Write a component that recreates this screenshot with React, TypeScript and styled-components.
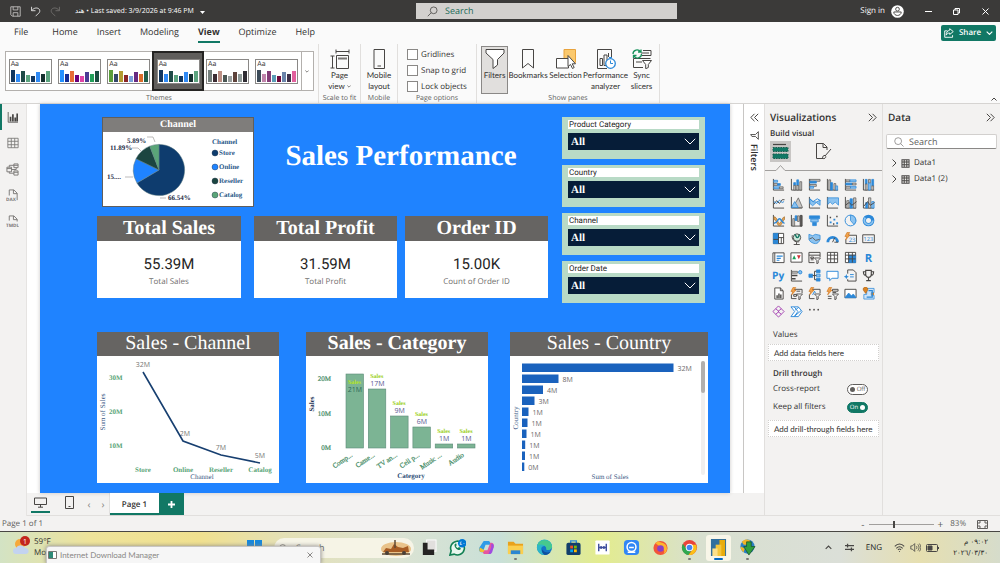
import React from 'react';
import styled, { createGlobalStyle } from 'styled-components';

const ui = '"Open Sans", "Noto Sans", "DejaVu Sans", sans-serif';
const compact = 'Lato, "Open Sans", sans-serif';
const serif = '"Liberation Serif", serif';
const ink = '#484644';
const blue = '#2b88d8';
const pale = '#8cc3f0';
const green = '#117865';

const Global = createGlobalStyle`
  * { box-sizing: border-box; }
  body { margin: 0; font-family: ${ui}; font-size: 8px; line-height: 12px; color: #323130; text-rendering: geometricPrecision; }
  button, input, select { font: inherit; color: inherit; margin: 0; padding: 0; border: 0; background: none; text-rendering: inherit; }
  svg { display: block; flex: none; }
  h1, h2, p { margin: 0; }
`;

const Shell = styled.div`
  min-height: 100vh;
  display: flex;
  flex-direction: column;
  background: #f3f2f1;
`;

/* ---------- title bar ---------- */
const TitleBar = styled.header`
  display: grid;
  grid-template-columns: 416fr 261fr 323fr;
  align-items: center;
  height: 22px;
  background: #3b3a39;
  color: #fff;
`;
const TitleLeft = styled.div`
  display: flex;
  align-items: center;
  gap: 9px;
  padding-left: 10px;
`;
const FileName = styled.span`
  display: flex;
  align-items: center;
  gap: 6px;
  padding: 2px 0 0 5px;
  font-size: 7px;
  white-space: nowrap;
`;
const TitleSearch = styled.label`
  display: flex;
  align-items: center;
  gap: 7px;
  height: 16px;
  padding: 0 11px;
  background: #d2d0ce;
  color: #3b3a39;
  input { flex: 1; min-width: 0; font-size: 9px; outline: 0; }
  input::placeholder { color: #1c6b58; opacity: 1; }
`;
const TitleRight = styled.div`
  display: flex;
  align-items: center;
  justify-content: flex-end;
  padding-right: 10px;
`;
const SignIn = styled.button`
  display: flex;
  align-items: center;
  gap: 6px;
  margin-right: 10px;
`;
const WinButton = styled.button`
  display: grid;
  place-items: center;
  width: 28px;
  height: 20px;
  &:last-child { width: 10px; margin-left: 10px; }
`;

/* ---------- ribbon ---------- */
const Ribbon = styled.div`
  background: #fafafa;
  border-bottom: 1px solid #d6d4d2;
`;
const TabRow = styled.nav`
  display: flex;
  align-items: center;
  height: 22px;
  padding: 0 4px 0 14px;
  gap: 19px;
`;
const RibbonTab = styled.button<{ $on?: boolean }>`
  height: 20px;
  font-size: 9px;
  line-height: 18px;
  font-weight: ${p => (p.$on ? 700 : 400)};
  border-bottom: 2px solid ${p => (p.$on ? green : 'transparent')};
  &:first-child { margin-right: 5px; }
`;
const ShareButton = styled.button`
  display: flex;
  align-items: center;
  justify-content: center;
  gap: 5px;
  width: 55px;
  height: 16px;
  margin-left: auto;
  border-radius: 2px;
  background: ${green};
  color: #fff;
  font-weight: 600;
`;
const GroupRow = styled.div`
  display: flex;
  height: 59px;
`;
const Group = styled.section<{ $w: number }>`
  display: flex;
  flex-direction: column;
  align-items: center;
  flex: 0 0 ${p => p.$w}px;
  border-right: 1px solid #e1dfdd;
`;
const GroupBody = styled.div`
  flex: 1;
  display: flex;
  align-items: flex-start;
  padding-top: 2px;
`;
const GroupLabel = styled.span`
  font-size: 7px;
  line-height: 8px;
  color: #605e5c;
  white-space: nowrap;
`;
const Gallery = styled.div`
  display: flex;
  width: 309px;
  height: 40px;
  margin-top: 5px;
  border: 1px solid #b3b0ad;
  background: #fff;
`;
const Thumb = styled.button<{ $on?: boolean }>`
  flex: 1;
  display: grid;
  place-items: center;
  background: ${p => (p.$on ? '#605e5c' : 'transparent')};
  outline: ${p => (p.$on ? '2px solid #252423' : '0')};
  outline-offset: -1px;
`;
const ThumbCard = styled.span`
  display: block;
  width: 43px;
  height: 25px;
  border: 1px solid #8a8886;
  background: #fff;
  text-align: left;
  padding: 1px 1px 0;
  font-size: 7px;
  line-height: 8px;
`;
const ThumbBars = styled.span`
  display: flex;
  align-items: flex-end;
  height: 13px;
  gap: 1px;
`;
const ThumbBar = styled.i<{ $h: number; $c: string }>`
  flex: 1;
  height: ${p => p.$h}px;
  background: ${p => p.$c};
`;
const GalleryMore = styled.button`
  display: grid;
  place-items: center;
  width: 11px;
  border-left: 1px solid #b3b0ad;
`;
const BigButton = styled.button<{ $w: number; $on?: boolean }>`
  display: flex;
  flex-direction: column;
  align-items: center;
  gap: 1px;
  width: ${p => p.$w}px;
  height: 48px;
  padding-top: 2px;
  font-family: ${compact};
  line-height: 11px;
  text-align: center;
  border: 1px solid ${p => (p.$on ? '#8a8886' : 'transparent')};
  background: ${p => (p.$on ? '#e1dfdd' : 'transparent')};
  span { white-space: pre; }
  span svg { display: inline-block; margin-left: 2px; vertical-align: middle; }
`;
const Checks = styled.div`
  display: flex;
  flex-direction: column;
  gap: 5px;
  padding-top: 3px;
`;
const Check = styled.label`
  display: flex;
  align-items: center;
  gap: 3px;
  height: 11px;
  white-space: nowrap;
  input { appearance: none; width: 11px; height: 11px; border: 1px solid #8a8886; background: #fff; }
`;
const Collapse = styled.button`
  margin: auto 3px 2px auto;
`;

/* ---------- workspace ---------- */
const Work = styled.div`
  flex: 1;
  display: flex;
  align-items: stretch;
`;
const Center = styled.div`
  flex: 1;
  min-width: 0;
  display: flex;
  flex-direction: column;
`;
const Rail = styled.nav`
  width: 27px;
  display: flex;
  flex-direction: column;
  border-right: 1px solid #e6e4e2;
`;
const RailButton = styled.button<{ $on?: boolean }>`
  display: grid;
  place-items: center;
  height: 26px;
  padding-right: 3px;
  border-left: 2px solid ${p => (p.$on ? green : 'transparent')};
`;
const Stage = styled.div`
  flex: 1;
  display: flex;
  background: #fff;
`;
const Canvas = styled.main`
  flex: 1;
  margin: 0 13px;
  padding: 13px 22px 10px 57px;
  background: #1f83ff;
  box-shadow: 0 0 4px #c8c6c4;
`;
const TopGrid = styled.div`
  display: grid;
  grid-template-columns: 451fr 143fr;
  column-gap: 14px;
  padding-right: 3px;
`;
const Hero = styled.div`
  display: flex;
  padding-left: 5px;
  margin-bottom: 9px;
`;
const PieCard = styled.section`
  flex: 0 0 152px;
  height: 90px;
  border: 1px solid #605e5c;
  background: #fff;
  h2 {
    height: 14px;
    background: #7f7d7b;
    color: #fff;
    font: bold 10px/13px ${serif};
    text-align: center;
  }
`;
const ReportTitle = styled.h1`
  flex: 1;
  padding-top: 22px;
  color: #fff;
  font: bold 29px/34px ${serif};
  text-align: center;
  white-space: nowrap;
`;
const Kpis = styled.div`
  display: grid;
  grid-template-columns: 157fr 151fr 143fr;
`;
const KpiCard = styled.section`
  height: 82px;
  background: #fff;
  text-align: center;
  &:nth-child(1) { margin-right: 13px; }
  &:nth-child(2) { margin-right: 8px; }
  h2 {
    height: 25px;
    background: #666462;
    color: #fff;
    font: bold 20px/24px ${serif};
  }
  strong {
    display: block;
    padding-top: 14px;
    color: #252423;
    font: 400 15px/19px Roboto, sans-serif;
  }
  p { color: #706e6c; font-size: 8px; line-height: 16px; }
`;
const Slicers = styled.div`
  display: flex;
  flex-direction: column;
  gap: 6px;
`;
const Slicer = styled.label`
  display: block;
  height: 42px;
  padding: 3px 6px 0;
  background: #b8dac6;
`;
const SlicerName = styled.span`
  display: block;
  height: 9px;
  padding-left: 1px;
  background: #fff;
  color: #252423;
  font: 8px/9px Roboto, sans-serif;
`;
const SlicerBox = styled.span`
  display: grid;
  align-items: center;
  height: 17px;
  margin-top: 4px;
  background: #061d38;
  color: #fff;
  select {
    grid-area: 1 / 1;
    appearance: none;
    width: 100%;
    padding-left: 3px;
    font: bold 11px/16px ${serif};
  }
  svg { grid-area: 1 / 1; justify-self: end; margin-right: 3px; pointer-events: none; }
`;
const ChartRow = styled.div`
  display: grid;
  grid-template-columns: 209fr 204fr 198fr;
  margin-top: 29px;
`;
const ChartCard = styled.section<{ $bold?: boolean }>`
  background: #fff;
  &:nth-child(1) { margin-right: 27px; }
  &:nth-child(2) { margin-right: 22px; }
  h2 {
    height: 24px;
    background: #666462;
    color: #fff;
    font: ${p => (p.$bold ? 'bold' : 'normal')} 20px/23px ${serif};
    text-align: center;
    white-space: nowrap;
  }
  svg { width: 100%; height: auto; }
`;
const FilterStrip = styled.aside`
  width: 21px;
  display: flex;
  flex-direction: column;
  align-items: center;
  padding-top: 9px;
  gap: 9px;
  border-left: 1px solid #c8c6c4;
  background: #fff;
  span { writing-mode: vertical-rl; font-size: 9px; font-weight: 600; margin-top: -5px; }
`;

/* ---------- page tabs ---------- */
const PageTabs = styled.div`
  display: flex;
  align-items: stretch;
  height: 23px;
  padding-left: 4px;
  border-bottom: 1px solid #e1dfdd;
`;
const ViewButton = styled.button<{ $on?: boolean }>`
  display: grid;
  place-items: center;
  width: 19px;
  height: 20px;
  margin-right: ${p => (p.$on ? 10 : 3)}px;
  border-bottom: 2px solid ${p => (p.$on ? green : 'transparent')};
`;
const Arrow = styled.button`
  width: 14px;
  color: #8a8886;
  font-size: 10px;
`;
const PageTab = styled.button`
  width: 49px;
  padding-top: 3px;
  background: #fff;
  font-weight: 600;
  border-bottom: 2px solid ${green};
  box-shadow: 0 0 1px #8a8886;
`;
const AddPage = styled.button`
  display: grid;
  place-items: center;
  width: 25px;
  background: ${green};
`;

/* ---------- panes ---------- */
const Pane = styled.aside`
  width: 118px;
  border-left: 1px solid #e1dfdd;
  border-bottom: 1px solid #e1dfdd;
`;
const PaneHead = styled.div`
  display: flex;
  align-items: center;
  justify-content: space-between;
  height: 24px;
  padding: 2px 5px 0;
  h2 { font-size: 10px; font-weight: 600; }
`;
const BuildLabel = styled.p`
  padding-left: 5px;
  font-weight: 600;
`;
const Heading = styled.p<{ $top: number; $strong?: boolean }>`
  margin-top: ${p => p.$top}px;
  padding-left: 8px;
  font-weight: ${p => (p.$strong ? 600 : 400)};
`;
const ModeRow = styled.div`
  display: flex;
  gap: 22px;
  padding: 1px 5px 3px;
`;
const ModeButton = styled.button<{ $on?: boolean }>`
  display: grid;
  place-items: center;
  width: 21px;
  height: 21px;
  background: ${p => (p.$on ? '#c8c6c4' : 'transparent')};
`;
const IconGrid = styled.div`
  display: grid;
  grid-template-columns: repeat(6, 1fr);
  align-content: space-between;
  height: 150px;
  padding: 4px 4px 0;
  button { display: grid; place-items: center; height: 18px; }
`;
const Well = styled.button<{ $top: number }>`
  display: block;
  width: 111px;
  height: 17px;
  margin: ${p => p.$top}px 3px 0;
  padding-left: 5px;
  border: 1px dotted #d2d0ce;
  background: #fff;
  font-family: ${compact};
  text-align: left;
  white-space: nowrap;
`;
const ToggleRow = styled.label`
  display: flex;
  align-items: center;
  justify-content: space-between;
  height: 18px;
  padding: 0 14px 0 8px;
`;
const Toggle = styled.span<{ $on?: boolean }>`
  display: flex;
  flex-direction: ${p => (p.$on ? 'row-reverse' : 'row')};
  align-items: center;
  justify-content: center;
  gap: 2px;
  width: 21px;
  height: 11px;
  border: 1px solid ${p => (p.$on ? green : '#605e5c')};
  border-radius: 6px;
  background: ${p => (p.$on ? green : '#fff')};
  color: ${p => (p.$on ? '#fff' : '#605e5c')};
  font-size: 6px;
  line-height: 9px;
  input { appearance: none; width: 5px; height: 5px; border-radius: 50%; background: currentColor; }
`;
const DataSearch = styled.label`
  display: flex;
  align-items: center;
  gap: 5px;
  height: 15px;
  margin: 6px 3px 6px;
  padding: 0 7px;
  border: 1px solid #d2d0ce;
  border-bottom-color: #8a8886;
  border-radius: 2px;
  background: #fff;
  input { flex: 1; min-width: 0; font-size: 9px; outline: 0; }
  input::placeholder { color: #605e5c; opacity: 1; }
`;
const TreeRow = styled.button`
  display: flex;
  align-items: center;
  gap: 4px;
  height: 16px;
  padding-left: 9px;
`;

/* ---------- status bar ---------- */
const Status = styled.footer`
  display: flex;
  align-items: center;
  height: 16px;
  padding: 1px 12px 0 2px;
  border-bottom: 1px solid #484644;
  color: #605e5c;
`;
const Zoom = styled.label`
  display: flex;
  align-items: center;
  gap: 4px;
  margin-left: auto;
  font-size: 10px;
  input {
    appearance: none;
    width: 65px;
    height: 8px;
    background: linear-gradient(#a19f9d, #a19f9d) center / 100% 1px no-repeat;
  }
  input::-webkit-slider-thumb { appearance: none; width: 2px; height: 7px; background: #484644; }
`;
const Percent = styled.span`
  margin: 0 11px 0 7px;
  font-size: 8px;
`;

/* ---------- taskbar ---------- */
const Taskbar = styled.footer`
  position: relative;
  display: flex;
  height: 31px;
  overflow: hidden;
  background: linear-gradient(90deg, #d3e3c4 0, #eee39a 9%, #f0e08f 20%, #e5e0b4 28%, #dbe3d3 40%, #c9e0d8 50%, #e3ec8e 60%, #d8e0cf 70%, #dbdfd8 84%, #e6dfb0 92%, #d6dccb 100%);
`;
const Weather = styled.button`
  display: flex;
  gap: 4px;
  width: 245px;
  padding: 4px 0 0 13px;
  text-align: left;
  line-height: 11px;
`;
const Apps = styled.div`
  display: flex;
  align-items: flex-start;
  flex: 1;
`;
const Start = styled.button`
  width: 20px;
  padding: 8px 0 0 2px;
  margin-right: 9px;
`;
const TaskSearch = styled.label`
  display: flex;
  align-items: center;
  gap: 8px;
  width: 140px;
  height: 20px;
  margin: 6px 0 0;
  padding: 0 2px 0 5px;
  border-radius: 10px;
  background: #f6f4e6;
  input { flex: 1; min-width: 0; font-size: 9px; outline: 0; }
  input::placeholder { color: #605e5c; opacity: 1; }
`;
const AppButton = styled.button<{ $open?: boolean; $on?: boolean }>`
  display: flex;
  flex-direction: column;
  align-items: center;
  width: 25px;
  height: 26px;
  margin: 3px 2px 0;
  padding-top: 4px;
  gap: 2px;
  border-radius: 3px;
  background: ${p => (p.$on ? '#f8f6e8' : 'transparent')};
  &::after {
    content: '';
    width: ${p => (p.$on ? 9 : 3)}px;
    height: 2px;
    border-radius: 1px;
    background: ${p => (p.$on ? '#0067c0' : p.$open ? '#797775' : 'transparent')};
  }
`;
const Tray = styled.div`
  display: flex;
  align-items: center;
  gap: 5px;
  padding-right: 12px;
  color: #252423;
`;
const QuickSettings = styled.button`
  margin-left: 8px;
`;
const Lang = styled.button`
  margin: 0 7px;
`;
const Clock = styled.time`
  width: 38px;
  margin-left: 6px;
  line-height: 11px;
  direction: rtl;
  font-family: "DejaVu Sans", sans-serif;
  font-size: 7px;
  white-space: nowrap;
`;
const Popup = styled.div`
  position: absolute;
  left: 46px;
  top: 14px;
  display: flex;
  align-items: center;
  gap: 3px;
  width: 275px;
  height: 18px;
  padding: 0 7px 0 1px;
  border: 1px solid #c8c6c4;
  border-radius: 3px 3px 0 0;
  background: #f6f6f6;
  box-shadow: 0 0 4px #8a8886;
  color: #8a8886;
  font-family: ${compact};
  button { margin-left: auto; }
`;

/* ---------- drawing helpers ---------- */
type IconProps = { s?: number; w?: number; h?: number; box?: string; children: React.ReactNode; c?: string };
const Icon = ({ s = 14, w, h, box = '0 0 14 14', c = ink, children }: IconProps) => (
  <svg width={w ?? s} height={h ?? s} viewBox={box} fill="none" stroke={c} strokeWidth="1" aria-hidden="true">
    {children}
  </svg>
);
const Magnifier = ({ s = 10, flip = false, c = ink }: { s?: number; flip?: boolean; c?: string }) => (
  <Icon s={s} c={c}>
    {flip ? <><circle cx="8.5" cy="5.5" r="4.3" /><path d="M5.4 8.6 1 13" /></> : <><circle cx="5.8" cy="5.8" r="4.8" /><path d="m9.3 9.3 4 4" /></>}
  </Icon>
);
const Chevrons = ({ left = false }: { left?: boolean }) => (
  <Icon s={9} box="0 0 9 9">
    {left ? <path d="M4.5.8.8 4.5l3.7 3.7M8.2.8 4.5 4.5l3.7 3.7" /> : <path d="m.8.8 3.7 3.7L.8 8.2M4.5.8l3.7 3.7-3.7 3.7" />}
  </Icon>
);
const Down = ({ w = 6, c = ink, up = false }: { w?: number; c?: string; up?: boolean }) => (
  <Icon w={w} h={w / 2 + 1} box="0 0 12 8" c={c}><path strokeWidth="2" d={up ? 'm1 7 5-5 5 5' : 'm1 1 5 5 5-5'} /></Icon>
);

const themes = [
  ['#12375f', '#2f8af5', '#1f4a47', '#5ba37e', '#12375f', '#2f8af5', '#14302e', '#5ba37e'],
  ['#2491ff', '#122d96', '#e66c37', '#6b007b', '#e044a7', '#4a3b94', '#22a05a', '#1a4d40'],
  ['#5b9e3b', '#35486b', '#b39a30', '#8a2528', '#7aa0dc', '#672a80', '#db6d2b', '#23604c'],
  ['#12375f', '#2f8af5', '#1f4a47', '#5ba37e', '#12375f', '#2f8af5', '#14302e', '#5ba37e'],
  ['#75807d', '#3b2c33', '#bb8f84', '#4b5754', '#9aa09f', '#5e433c', '#8f9a98', '#2f2c33'],
  ['#3c4b59', '#bf83aa', '#833c77', '#5a9bb5', '#6e0a3b', '#6a84aa', '#3e3048', '#e2609d'],
];
const thumbHeights = [12, 8, 11, 7, 6, 10, 8, 11];
const tabs = ['File', 'Home', 'Insert', 'Modeling', 'View', 'Optimize', 'Help'];

/* ---------- visual gallery icons ---------- */
const axis = <path d="M1.5 1v12H13" />;
const F = ({ d, c = pale }: { d: string; c?: string }) => <path d={d} fill={c} stroke={blue} strokeWidth=".8" />;
const G = ({ d }: { d: string }) => <path d={d} fill="#c8c6c4" stroke="#605e5c" strokeWidth=".8" />;
const Bolt = () => <path d="M3.2.5h3L4.5 3.3h2L1.8 8.5l1.2-3.7H1z" fill="#f2a34b" stroke="#c96b12" strokeWidth=".6" />;
const Funnel = () => <path d="M7 7.5h6.5L11 10.3V13l-1.5.7v-3.4z" fill="#f3f2f1" strokeWidth=".9" />;
const visuals: [string, React.ReactNode][] = [
  ['Stacked bar chart', <>{axis}<F d="M2 2.5h4v2H2z" /><G d="M2 6h4v2H2z" /><F d="M6 6h3v2H6z" c={blue} /><F d="M2 9.5h6v2H2z" /><G d="M8 9.5h4v2H8z" /></>],
  ['Stacked column chart', <>{axis}<F d="M4 5h2v3H4z" c={blue} /><G d="M4 8h2v5H4z" /><F d="M7.3 2h2v6h-2z" c={blue} /><G d="M7.3 8h2v5h-2z" /><G d="M10.6 4h2v9h-2z" /></>],
  ['Clustered bar chart', <>{axis}<G d="M2 1.5h11v2H2z" /><F d="M2 3.5h7v2H2z" c={blue} /><G d="M2 7h7v2H2z" /><F d="M2 9h4v2H2z" /></>],
  ['Clustered column chart', <>{axis}<G d="M3 2h2v11H3z" /><F d="M5 5h2v8H5z" c={blue} /><G d="M8.5 6h2v7h-2z" /><F d="M10.5 8.5h2V13h-2z" /></>],
  ['100% stacked bar chart', <>{axis}<G d="M2 2h4.5v2H2z" /><F d="M6.5 2H13v2H6.5z" /><F d="M2 5.5h7v2H2z" c={blue} /><G d="M9 5.5h4v2H9z" /><G d="M2 9h5v2H2z" /><F d="M7 9h6v2H7z" /></>],
  ['100% stacked column chart', <>{axis}<F d="M3.5 1.5h2v5h-2z" c={blue} /><G d="M3.5 6.5h2V13h-2z" /><G d="M7 1.5h2v4H7z" /><F d="M7 5.5h2V13H7z" /><F d="M10.5 1.5h2v7h-2z" c={blue} /><G d="M10.5 8.5h2V13h-2z" /></>],
  ['Line chart', <>{axis}<path d="m2 9 3-4 3 3 3-4h2.5" /><path d="m2 6 3 2 3-3.500L11 7l2-1" stroke={blue} /></>],
  ['Area chart', <>{axis}<G d="M3 12.5 9 2l4.5 10.5z" /><F d="M1.5 12.5 5 6l4 6.5z" /></>],
  ['Stacked area chart', <>{axis}<F d="m2 8 3 2.500 4-3.500 4 3V4.500L9 6.500 5 6 2 3z" /><path d="m2 3 3.500 3L10 3l3.500 2" stroke={blue} /></>],
  ['100% stacked area chart', <>{axis}<F d="M2 2h11.5v8L10 6.5 7 9 4.5 6.5 2 9z" /></>],
  ['Line and stacked column chart', <>{axis}<G d="M3 5h2.5v8H3z" /><F d="M6.5 3H9v10H6.5z" c={blue} /><G d="M10.3 2h2.5v11h-2.5z" /><path d="m1.5 10 4-3 3 3 5-4" /></>],
  ['Line and clustered column chart', <>{axis}<F d="M4 7h2v6H4z" c={blue} /><G d="M7 2h2.5v11H7z" /><F d="M10.5 6H13v7h-2.5z" /><path d="m2 11 4-5 3 4 4.500-3" /></>],
  ['Ribbon chart', <>{axis}<path d="M2 3c4 0 4 7 6 7s3-7 5.500-7v3C12 6 11 12.500 8 12.500S5 6 2 6z" fill="#e5a355" stroke="#9a6a2c" strokeWidth=".7" /><path d="M2 10c4 0 4-5 6-5s3 5 5.500 5" stroke={blue} strokeWidth="1.6" /></>],
  ['Waterfall chart', <>{axis}<G d="M3 5h2v8H3z" /><F d="M5.5 2h2v5h-2z" c={blue} /><G d="M8 2h2v6H8z" /><path d="M11 1.5h2V13h-2z" fill="#605e5c" /></>],
  ['Funnel chart', <><F d="M1.5 2h11v3h-11z" c={blue} /><F d="M3 5.500h8v3H3z" /><F d="M5 9h4v3.500H5z" c={blue} /></>],
  ['Scatter chart', <>{axis}<g stroke="none" fill={blue}><path d="M4 8h2v2H4zM8 5h2v2H8zM11 9h2v2h-2z" /></g><g stroke="none" fill={ink}><path d="M4 3h1.500v1.500H4zM11 2h1.500v1.500H11zM7.500 10H9v1.500H7.500z" /></g></>],
  ['Pie chart', <><circle cx="7" cy="7" r="5.8" stroke={blue} fill="#f3f2f1" /><F d="M7 1.200V7l3.800 4.400A5.800 5.800 0 0 0 7 1.200z" /></>],
  ['Donut chart', <><circle cx="7" cy="7" r="4.5" stroke={blue} strokeWidth="3.6" /><circle cx="7" cy="7" r="4.5" stroke={pale} strokeWidth="2" strokeDasharray="17 12" /></>],
  ['Treemap', <><path d="M1.5 1.5h11v11h-11z" fill="#fff" /><F d="M1.5 1.5H7v11H1.5z" c={blue} /><path d="M7 6h5.5M7 1.500v11M10 6v6.500M1.500 8H7" /></>],
  ['Map', <><circle cx="7.5" cy="6" r="4" fill="#cfe8db" /><path d="M5 3c2 0 1 3 3 3s1-3 2.500-3" stroke="#117865" strokeWidth="1.5" /><path d="M2.500 3.500C1.500 8 5 11.500 10 10.500M7 11v2.500M4 13.500h6.500" /></>],
  ['Filled map', <><F d="M1 2.500 5 4l3-1.500 5 1V8c-1 3-3 4.500-5 4.500S2 11 1 8z" /><path d="M1.500 7.500 5 6l3 3 4.500-1" stroke="#605e5c" /></>],
  ['Gauge', <><path d="M2 11a5.200 5.200 0 0 1 10.400 0" stroke={blue} strokeWidth="3" /><path d="m7 11 2.500-5M9 11h4" stroke={ink} /></>],
  ['New card', <><path d="M3 3.500h10.500v9H2V8" /><text x="5" y="11" fontSize="6.5" fill={blue} stroke="none">23</text><Bolt /></>],
  ['Card', <><path d="M.8 3h12.500v8.500H.8z" /><text x="1.7" y="9.8" fontSize="6" fill={blue} stroke="none">123</text></>],
  ['Multi-row card', <><path d="M1 2h12v10.500H1z" fill="#fff" /><path d="M3 2v10.500" /><path d="M5 5.500h6.500M5 8h4.500M5 10h3" stroke={blue} strokeWidth="1.2" /></>],
  ['KPI', <><path d="M1 2h12v10H1z" fill="#fff" /><path d="m2.500 9 2-4.500 2 4.500z" fill="#17a05a" stroke="none" /><path d="m7.500 4.500 2 4.500 2-4.500z" fill="#d13438" stroke="none" /></>],
  ['Slicer', <><path d="M7 12.500H1V1.500h12v5M1 4.500h12M3 6.500h3v1.500H3zM3 9.500h3" /><Funnel /></>],
  ['Table', <><path d="M1.500 1.500h11v11h-11z" fill="#fff" /><path d="M1.500 4.500h11M1.500 8.500h11M5 1.500v11M9 1.500v11" /></>],
  ['Matrix', <><path d="M1.500 1.500h11v11h-11z" fill="#fff" /><F d="M5 4.500h7.500v8H5z" c={blue} /><path d="M1.500 4.500h11M1.500 8.500h11M5 1.500v11M9 1.500v11" /></>],
  ['R script visual', <text x="3" y="11.5" fontSize="12" fontWeight="700" fill={blue} stroke="none">R</text>],
  ['Python visual', <text x="0" y="11" fontSize="11" fontWeight="700" fill={blue} stroke="none">Py</text>],
  ['Key influencers', <>{axis}<G d="M2 2.500h6v2H2z" /><path d="M2 7h6M2 10.500h4" strokeWidth="1.6" /><circle cx="11" cy="3.5" r="1.8" fill={pale} stroke={blue} /></>],
  ['Decomposition tree', <><F d="M1 5.500h4v3.500H1z" c={blue} /><F d="M9 1h4v3H9z" c={blue} /><F d="M9 5.500h4v3H9z" /><F d="M9 10h4v3H9z" c={blue} /><path d="M5 7h4M7 2.500v9M7 2.500h2M7 11.500h2" /></>],
  ['Q and A', <path d="M1 2.500h12V10H6.500L4 12.500V10H1z" stroke={blue} fill="#fff" />],
  ['Smart narrative', <><path d="M4 5V1h6l3 3v9H4v-2" /><path d="M6.500 6h4M6.500 8.500h4" stroke={blue} /><path d="m2.500 5.500.8 2 2 .8-2 .8-.8 2-.8-2-2-.8 2-.8z" fill={blue} stroke="none" /></>],
  ['Goals', <path d="M4 1.500h6V6c0 4-6 4-6 0zM4 3H1.500c0 3 1 4 3 4M10 3h2.500c0 3-1 4-3 4M7 9v3M4.500 12.500h5" strokeWidth="1.2" />],
  ['Paginated report', <><path d="M3 1h6l3 3v9H3z" fill="#fff" /><path d="M9 1v3h3" /><path d="M5.500 12V9M7.500 12V7M9.500 12V8" strokeWidth="1.5" /></>],
  ['Button slicer', <><path d="M4 2.500h9v4M1.500 8v4.500H7M7 4.500h4M4 8h3v2H4z" /><Bolt /><Funnel /></>],
  ['Text slicer', <><path d="M4 2.500h9v4M1.500 8v4.500H7" /><path d="m5 8.500 2-4 1 2" stroke={blue} /><Bolt /><Funnel /></>],
  ['List slicer', <><path d="M7 2.500h6v2H7zM7 6h4M2 10h4M2 12.500h4" /><Bolt /><Funnel /></>],
  ['Image', <><path d="M1 2.500h12v9H1z" fill="#fff" /><F d="m1 11.500 4-5 3 3 2-2 3 4z" c={blue} /></>],
  ['ArcGIS map', <><F d="M5 1.500h8V6h-3v3h3v4H2V8h3z" c="#cfe4f7" /><path d="M4 7 1.500 3.500a2.500 2.500 0 1 1 4.500 0z" fill="#d98324" stroke="#a35a10" strokeWidth=".6" /><circle cx="11.5" cy="7.5" r="1.6" fill="#d98324" stroke="none" /><path d="M7 4h4v7H5" stroke={blue} strokeWidth="1.4" /></>],
  ['Power Apps', <g stroke="#a23fb0"><path d="m7 1 6 6-6 6-6-6z" /><path d="m4 4 3.500 3L4 10M10 4 6.500 7l3.500 3" /></g>],
  ['Power Automate', <g stroke={blue}><path d="M1 2h8l4 5-4 5.500H1L5 7z" fill="#fff" /><path d="m4.500 2 4 5-4 5.500M5.500 5.500 9.500 2.500M5 12l7-6" /></g>],
  ['More visuals', <g fill={ink} stroke="none"><circle cx="2" cy="5" r=".9" /><circle cx="6.5" cy="5" r=".9" /><circle cx="11" cy="5" r=".9" /></g>],
];

/* ---------- charts ---------- */
const slice = (from: number, to: number, cx: number, cy: number, r: number) => {
  const at = (f: number) => `${cx + r * Math.sin(f * 2 * Math.PI)} ${cy - r * Math.cos(f * 2 * Math.PI)}`;
  return `M${cx} ${cy}L${at(from)}A${r} ${r} 0 ${to - from > 0.5 ? 1 : 0} 1 ${at(to)}Z`;
};
const pieParts: [string, number, number, string][] = [
  ['Store', 0, 0.6654, '#0e3c6e'],
  ['Online', 0.6654, 0.8222, '#1f83ff'],
  ['Reseller', 0.8222, 0.9411, '#1b4540'],
  ['Catalog', 0.9411, 1, '#5aa578'],
];
const PieChart = () => (
  <svg width="150" height="74" viewBox="0 0 150 74" fontFamily="Liberation Serif" fontWeight="700" fontSize="7" fill="#1a2b45" role="img" aria-label="Channel share">
    {pieParts.map(([n, a, b, c]) => <path key={n} d={slice(a, b, 56, 38, 25.6)} fill={c} stroke="#5b7a80" strokeWidth=".5" />)}
    <g stroke="#a19f9d" strokeWidth=".7" fill="none"><path d="M44 5h6l2 5M29 16h6l3 3M22 45h8M57 66h6" /></g>
    <text x="24" y="11">5.89%</text>
    <text x="7" y="18">11.89%</text>
    <text x="4" y="47">15....</text>
    <text x="65" y="68">66.54%</text>
    <text x="109" y="12" fill="#2c5a8a">Channel</text>
    {pieParts.map(([n, , , c], i) => (
      <g key={n}><circle cx="112" cy={21 + i * 14} r="3" fill={c} stroke="#1a2b45" strokeWidth=".4" /><text x="116" y={23 + i * 14} fill="#2c5a8a">{n}</text></g>
    ))}
  </svg>
);
const linePts: [string, string, number, number, number][] = [
  ['Store', '32M', 46, 16, 0], ['Online', '2M', 86, 85, 2], ['Reseller', '7M', 124, 99, 0], ['Catalog', '5M', 163, 107, 0],
];
const LineChart = () => (
  <svg viewBox="0 0 182 127" fontFamily="Liberation Serif" fontSize="7" role="img" aria-label="Sum of Sales by Channel">
    {['30M', '20M', '10M'].map((t, i) => <text key={t} x="12" y={24 + i * 34} fill="#5aa578" fontWeight="700">{t}</text>)}
    {linePts.map(([n, v, x, y, dx]) => (
      <g key={n} textAnchor="middle">
        <text x={x + dx} y={y - 5} fontFamily="Open Sans" fill="#797775">{v}</text>
        <text x={x} y="116" fill="#5aa578" fontWeight="700">{n}</text>
      </g>
    ))}
    <polyline points={linePts.map(p => `${p[2]},${p[3]}`).join(' ')} fill="none" stroke="#173f70" strokeWidth="1.6" />
    <text x="105" y="123" textAnchor="middle" fill="#3d5a86">Channel</text>
    <text transform="translate(8 56) rotate(-90)" textAnchor="middle" fill="#3d5a86">Sum of Sales</text>
  </svg>
);
const cats: [string, string, number][] = [
  ['Comp...', '21M', 18], ['Came...', '17M', 33], ['TV an...', '9M', 60], ['Cell p...', '6M', 71], ['Music ...', '1M', 88], ['Audio', '1M', 88],
];
const CategoryChart = () => (
  <svg viewBox="0 0 182 127" fontFamily="Liberation Serif" fontSize="7" role="img" aria-label="Sales by Category">
    {['20M', '10M', '0M'].map((t, i) => <text key={t} x="25" y={25 + i * 34.5} textAnchor="end" fill="#3f8a62" stroke="#3f8a62" strokeWidth=".2">{t}</text>)}
    {cats.map(([n, v, y], i) => {
      const x = 40 + i * 22.3;
      const base = i === 0 ? 36 : y - 3;
      return (
        <g key={n}>
          <rect x={x} y={y} width="17.5" height={92 - y} fill="#7cb494" stroke="#5c8b78" strokeWidth=".6" />
          <text x={x + 8.5} y={base - 8} textAnchor="middle" fontSize="6" fontWeight="700" fill={i === 0 ? '#b4e61e' : '#9bd01c'}>Sales</text>
          <text x={x + 9} y={base} textAnchor="middle" fontFamily="Open Sans" fill={i === 0 ? '#2f6a58' : '#5b5b94'}>{v}</text>
          <text transform={`translate(${x + 7} 100) rotate(-34)`} textAnchor="end" fill="#3f8a62" stroke="#3f8a62" strokeWidth=".2">{n}</text>
        </g>
      );
    })}
    <text x="105" y="122" textAnchor="middle" fontWeight="700" fill="#2f4f78">Category</text>
    <text transform="translate(8 48) rotate(-90)" textAnchor="middle" fontWeight="700" fill="#1f3558">Sales</text>
  </svg>
);
const countries: [string, number][] = [
  ['32M', 151.5], ['8M', 36.5], ['4M', 21], ['3M', 12.5], ['1M', 6.5], ['1M', 5.5], ['1M', 4.5], ['1M', 3.2], ['1M', 3], ['0M', 2.3],
];
const CountryChart = () => (
  <svg viewBox="0 0 198 127" fontFamily="Open Sans" fontSize="7" role="img" aria-label="Sum of Sales by Country">
    {countries.map(([v, w], i) => (
      <g key={i}><rect x="12" y={7.5 + i * 11} width={w} height="8.5" fill="#1a62bd" /><text x={16 + w} y={14.5 + i * 11} fill="#706e6c">{v}</text></g>
    ))}
    <rect x="191" y="5" width="4" height="114" rx="2" fill="#f0efee" />
    <rect x="191" y="5" width="4" height="32" rx="2" fill="#b3b0ad" />
    <g fontFamily="Liberation Serif" fill="#3d5a86" textAnchor="middle">
      <text x="100" y="123">Sum of Sales</text>
      <text transform="translate(8 62) rotate(-90)">Country</text>
    </g>
  </svg>
);

/* ---------- taskbar apps ---------- */
const apps: { name: string; open?: boolean; on?: boolean; art: React.ReactNode }[] = [
  { name: 'Task view', art: <><rect x="7" y="1" width="10" height="12" fill="#e1dfdd" stroke="#fff" /><path d="M3 4h5v7h7v6H3z" fill="#252423" /></> },
  { name: 'WhatsApp', art: <><path d="m1 17 1.300-4.500A7.300 7.300 0 1 1 5.500 16z" fill="#e9f7ee" stroke="#128054" strokeWidth="1.7" /><path d="M6 5.500c-1 3 3 7 6 6l.5-2-2-1-1 1C8 9 7.500 8 7.200 7.300l1-.8-.7-2z" fill="#128054" /><circle cx="14" cy="4.5" r="4.5" fill="#0078d4" /><text x="14" y="6.500" fontSize="6" fill="#fff" textAnchor="middle" fontFamily="DejaVu Sans">٤٠</text></> },
  { name: 'Copilot', art: <><path d="M6 2h5c2 0 2 3 3 4H8L5 14c-4 0-4-2-3.500-5z" fill="#2f9be8" /><path d="M12 16H7c-2 0-2-3-3-4h6l3-8c4 0 4 2 3.500 5z" fill="#e557a0" /><path d="M14 5c3 0 3 2 2.500 4L15 14c-1 2-2 2-4 2l3-7z" fill="#a04be0" /><path d="m2 9-.5 3c0 2 2 2 4 2l1.500-2z" fill="#f2c230" /></> },
  { name: 'File Explorer', open: true, art: <><path d="M1 3h6l2 2h8v10H1z" fill="#e9a21c" /><path d="M1 7h16v9H1z" fill="#fbcf4f" /><path d="M4 12h10v4H4z" fill="#2a86d1" /></> },
  { name: 'Edge', art: <><circle cx="9" cy="9" r="8" fill="#1374c7" /><path d="M1 9a8 8 0 0 1 16-1c0 4-5 4-6 3 1-3-2-4.500-4-3-3 2-1 7 3 9C4 17 1 13 1 9z" fill="#2db6c8" /><path d="M1.500 7A8 8 0 0 1 17 8c0 4-5 4-6 3 .5-4-5-7-9.500-4z" fill="#46c98e" /><path d="M7 11c1 3 5 4 8.500 2.500-1 2-3.500 3.500-6 3.500C6 15 6 12 7 11z" fill="#0f4f9e" /></> },
  { name: 'Microsoft Store', art: <><path d="M6 5V2h6v3" fill="none" stroke="#2f8ad8" strokeWidth="1.5" /><rect x="1.5" y="4" width="15" height="13" rx="2" fill="#123e6b" /><path d="M5.500 7h3v3h-3z" fill="#f25022" /><path d="M9.500 7h3v3h-3z" fill="#7fba00" /><path d="M5.500 11h3v3h-3z" fill="#00a4ef" /><path d="M9.500 11h3v3h-3z" fill="#ffb900" /></> },
  { name: 'Meeting notes', art: <><rect x="1.5" y="1.5" width="15" height="15" rx="1" fill="#fff" /><path d="M5 5v8M7.500 7.500v3M10.500 7.500v3M13 5v8M5 9h8" stroke="#3f4f9e" strokeWidth="1.5" /></> },
  { name: 'Messenger', art: <><rect x="1" y="1" width="16" height="16" rx="4" fill="#3187f5" /><circle cx="9" cy="8.5" r="4.7" fill="none" stroke="#fff" strokeWidth="1.6" /><path d="M6.500 9h5M5 14h8" stroke="#fff" strokeWidth="1.4" /></> },
  { name: 'Firefox', art: <><circle cx="9" cy="9.5" r="7.5" fill="#f2553a" /><path d="M3 4c2 0 3-1 3-2 2 2 7 1 9 5s0 8-3 9c2-3 1-5-1-6z" fill="#ffb52e" /><circle cx="9" cy="10" r="3.5" fill="#8a3fc4" /></> },
  { name: 'Chrome', open: true, art: <><circle cx="9" cy="9" r="8" fill="#e8453c" /><path d="M2 5a8 8 0 0 0 6 12l4-6.500H6z" fill="#2fa84f" /><path d="M8 17a8 8 0 0 0 8-11H9l3.500 5z" fill="#fbc116" /><circle cx="9" cy="9" r="4" fill="#fff" /><circle cx="9" cy="9" r="3" fill="#4285f4" /></> },
  { name: 'Power BI', open: true, on: true, art: <><rect x="1" y="0" width="16" height="18" fill="#2f6f9e" /><path d="M10 1h6v17h-6z" fill="#e8ad0c" /><path d="M6 6h6v12H6z" fill="#f4c63d" /><path d="M2.500 10H8v8H2.500z" fill="#fbe08a" /></> },
  { name: 'Internet Download Manager', open: true, art: <><circle cx="9" cy="8" r="7.5" fill="#2a7fc4" /><path d="M3 3c4-4 8-2 9-1L9 6H5zM2 8l4 2-1 4C2 12 1.500 10 2 8z" fill="#f0b429" /><path d="M8 8V3h5v5h4l-6.500 9L5 8z" fill="#2f9e3d" stroke="#154a1e" strokeWidth=".7" /></> },
];

export default function App() {
  return (
    <Shell>
      <Global />
      <TitleBar>
        <TitleLeft>
          <Icon s={11} c="#d2d0ce"><path d="M1 1h12v12H3L1 11zM4 1v4h6V1M4 13V8.500h6V13" /></Icon>
          <Icon s={11} c="#fff"><path d="M2 1v5h5M2.500 5.500C5 2 10 1.500 12 4.500c2 4-3 6-5 8.500" /></Icon>
          <Icon s={11} c="#797775"><path d="M12 1v5H7M11.500 5.500C9 2 4 1.500 2 4.500c-2 4 3 6 5 8.500" /></Icon>
          <FileName>
            <span><bdi>هند</bdi> • Last saved: 3/9/2026 at 9:46 PM</span>
            <Icon w={5} h={3} box="0 0 5 3"><path d="M0 0h5L2.500 3z" fill="#fff" stroke="none" /></Icon>
          </FileName>
        </TitleLeft>
        <TitleSearch>
          <Magnifier flip s={11} />
          <input type="search" placeholder="Search" aria-label="Search" />
        </TitleSearch>
        <TitleRight>
          <SignIn>
            Sign in
            <Icon s={13}><circle cx="7" cy="7" r="6.8" fill="#fff" stroke="none" /><circle cx="7" cy="4.5" r="2" /><path d="M3 7.500h8c0 5-8 5-8 0z" /></Icon>
          </SignIn>
          <WinButton aria-label="Minimize"><Icon s={7} box="0 0 7 7" c="#fff"><path d="M0 3.500h7" /></Icon></WinButton>
          <WinButton aria-label="Restore"><Icon s={7} box="0 0 7 7" c="#fff"><path d="M.5 2h4.500v4.500H.5zM2 2V.5h4.500V5H5" /></Icon></WinButton>
          <WinButton aria-label="Close"><Icon s={7} box="0 0 7 7" c="#fff"><path d="m.5.5 6 6m0-6-6 6" /></Icon></WinButton>
        </TitleRight>
      </TitleBar>

      <Ribbon>
        <TabRow>
          {tabs.map(t => <RibbonTab key={t} $on={t === 'View'}>{t}</RibbonTab>)}
          <ShareButton>
            <Icon s={10} c="#fff"><path strokeWidth="1.3" d="M5 4H1v9h11v-3M8 1l5 4-5 4V7C6 7 4 8 3 10c0-4 2-6 5-7z" /></Icon>
            Share <Down w={7} c="#fff" />
          </ShareButton>
        </TabRow>
        <GroupRow>
          <Group $w={319}>
            <GroupBody>
              <Gallery>
                {themes.map((t, i) => (
                  <Thumb key={i} $on={i === 3} aria-label={`Theme ${i + 1}`}>
                    <ThumbCard>Aa<ThumbBars>{t.map((c, k) => <ThumbBar key={k} $c={c} $h={thumbHeights[k]} />)}</ThumbBars></ThumbCard>
                  </Thumb>
                ))}
                <GalleryMore aria-label="More themes"><Down w={4} /></GalleryMore>
              </Gallery>
            </GroupBody>
            <GroupLabel>Themes</GroupLabel>
          </Group>
          <Group $w={42}>
            <GroupBody>
              <BigButton $w={40}>
                <Icon s={20} box="0 0 20 20"><path d="M6 2.500h13M6 .5v4M19 .5v4M2.500 7v12M.5 7h4M.5 19h4M6.500 6.500h12v13h-12z" /><path d="M8 9.500h9" strokeWidth="2" stroke="#797775" /></Icon>
                <span>{'Page\nview'}<Down w={4} /></span>
              </BigButton>
            </GroupBody>
            <GroupLabel>Scale to fit</GroupLabel>
          </Group>
          <Group $w={37}>
            <GroupBody>
              <BigButton $w={35}>
                <Icon s={20} box="0 0 20 20"><path d="M5 .5h10.500v19H5zM8.500 17h3.500" /></Icon>
                <span>{'Mobile\nlayout'}</span>
              </BigButton>
            </GroupBody>
            <GroupLabel>Mobile</GroupLabel>
          </Group>
          <Group $w={79}>
            <GroupBody>
              <Checks>
                {['Gridlines', 'Snap to grid', 'Lock objects'].map(t => <Check key={t}><input type="checkbox" />{t}</Check>)}
              </Checks>
            </GroupBody>
            <GroupLabel>Page options</GroupLabel>
          </Group>
          <Group $w={183}>
            <GroupBody>
              <BigButton $w={27} $on>
                <Icon s={20} box="0 0 20 20"><path d="M1 .5h18V4l-6.500 6.500V16L8 19.500v-9L1 4z" fill="#fff" /></Icon>
                <span>Filters</span>
              </BigButton>
              <BigButton $w={40}>
                <Icon s={20} box="0 0 20 20"><path d="M4.500.5h11v18.500L10 14.500 4.500 19z" /></Icon>
                <span>Bookmarks</span>
              </BigButton>
              <BigButton $w={35}>
                <Icon s={20} box="0 0 20 20"><path d="M8 .5h11.500v13H8z" fill="#fbc96e" stroke="#e8a33d" /><path d="M.5 9.500h12v9.500H.5z" fill="#fff" /><path d="M12 6.500v11l2.500-2 2 4 1.700-1-2-3.700h3.300z" fill="#fff" /></Icon>
                <span>Selection</span>
              </BigButton>
              <BigButton $w={45}>
                <Icon s={20} box="0 0 20 20"><path d="M15.500 9V.5h-14v19H11M4 9.500h2.500v7H4zM8 6h3v10.500H8zM12.500 4v4" /><circle cx="14.5" cy="14.5" r="4.8" fill="#fff" stroke={blue} strokeWidth="1.3" /><path d="M14.500 11.500v3h2.500M13 8.500h3" stroke={blue} /></Icon>
                <span>{'Performance\nanalyzer'}</span>
              </BigButton>
              <BigButton $w={27}>
                <Icon s={20} box="0 0 20 20"><path d="M11 1.500h8v5h-9M9 4h8M1.500 9.500h17M1.500 9.500v9H11M4 13h6" /><path d="M1 5a4 4 0 0 1 7.500-2M9 .5V3H6M9.500 5A4 4 0 0 1 2 7M1.500 9V6.500h3" stroke="#17925c" strokeWidth="1.3" /><path d="M10.500 11.500H19.500l-3.200 4v3l-2.600 1.200v-4.200z" fill="#fff" /></Icon>
                <span>{'Sync\nslicers'}</span>
              </BigButton>
            </GroupBody>
            <GroupLabel>Show panes</GroupLabel>
          </Group>
          <Collapse aria-label="Collapse ribbon"><Down up w={6} /></Collapse>
        </GroupRow>
      </Ribbon>

      <Work>
        <Rail>
          <RailButton $on aria-label="Report view"><Icon s={11}><path d="M1.500 0v13H14" /><path d="M4.500 12V6M7.500 12V3M10.500 12V7M13 12V2" strokeWidth="2.2" /></Icon></RailButton>
          <RailButton aria-label="Table view"><Icon s={12} c="#797775"><path d="M1 1.500h12v11H1zM1 5h12M1 9h12M5 1.500v11M9 1.500v11" /></Icon></RailButton>
          <RailButton aria-label="Model view"><Icon s={13} c="#797775"><path d="M1 4.500h5v5H1zM8.500 1H13v4H8.500zM8.500 8.500H13V13H8.500zM3.500 4.500V2.500h5M6 7h5V5M3.500 9.500V11h5M1 6h5M8.500 2.500H13M8.500 10H13" /></Icon></RailButton>
          <RailButton aria-label="DAX query view"><Icon s={13} c="#797775"><path d="M3.500 7V1h5L12 4.500V12M8 1v4h4" /><text x="0" y="13" fontSize="5" fontWeight="700" fill="#797775" stroke="none">DAX</text></Icon></RailButton>
          <RailButton aria-label="TMDL view"><Icon s={13} c="#797775"><path d="M3.500 6V1h5L12 4.500V7M8 1v4h4" /><text x="0" y="13" fontSize="5" fontWeight="700" fill="#797775" stroke="none">TMDL</text></Icon></RailButton>
        </Rail>

        <Center>
          <Stage>
            <Canvas>
              <TopGrid>
                <div>
                  <Hero>
                    <PieCard><h2>Channel</h2><PieChart /></PieCard>
                    <ReportTitle>Sales Performance</ReportTitle>
                  </Hero>
                  <Kpis>
                    {[['Total Sales', '55.39M', 'Total Sales'], ['Total Profit', '31.59M', 'Total Profit'], ['Order ID', '15.00K', 'Count of Order ID']].map(([t, v, l]) => (
                      <KpiCard key={t}><h2>{t}</h2><strong>{v}</strong><p>{l}</p></KpiCard>
                    ))}
                  </Kpis>
                </div>
                <Slicers>
                  {['Product Category', 'Country', 'Channel', 'Order Date'].map(n => (
                    <Slicer key={n}>
                      <SlicerName>{n}</SlicerName>
                      <SlicerBox>
                        <select defaultValue="All"><option>All</option></select>
                        <Icon w={12} h={7} box="0 0 12 7" c="#fff"><path d="m.8.8 5.200 5.200L11.200.8" /></Icon>
                      </SlicerBox>
                    </Slicer>
                  ))}
                </Slicers>
              </TopGrid>
              <ChartRow>
                <ChartCard><h2>Sales - Channel</h2><LineChart /></ChartCard>
                <ChartCard $bold><h2>Sales - Category</h2><CategoryChart /></ChartCard>
                <ChartCard><h2>Sales - Country</h2><CountryChart /></ChartCard>
              </ChartRow>
            </Canvas>
            <FilterStrip>
              <Chevrons left />
              <Icon s={9}><path strokeWidth="1.4" d="M13 1v12L8.500 8.500H3L1 5.500h7.500z" /></Icon>
              <span>Filters</span>
            </FilterStrip>
          </Stage>
          <PageTabs>
            <ViewButton $on aria-label="Desktop layout"><Icon w={13} h={11} box="0 0 13 11"><path d="M.5 1h12v6.500H.5zM6.500 7.500V10M4 10.200h5" /></Icon></ViewButton>
            <ViewButton aria-label="Mobile layout"><Icon w={9} h={13} box="0 0 9 13"><path d="M.5.5h8v12h-8zM3.500 10.500h2" /></Icon></ViewButton>
            <Arrow aria-label="Previous page">‹</Arrow>
            <Arrow aria-label="Next page">›</Arrow>
            <PageTab>Page 1</PageTab>
            <AddPage aria-label="New page"><Icon s={7} box="0 0 7 7" c="#fff"><path strokeWidth="1.8" d="M3.500 0v7M0 3.500h7" /></Icon></AddPage>
          </PageTabs>
        </Center>

        <Pane>
          <PaneHead><h2>Visualizations</h2><Chevrons /></PaneHead>
          <BuildLabel>Build visual</BuildLabel>
          <ModeRow>
            <ModeButton $on aria-label="Build visual"><Icon s={17} box="0 0 17 17"><path d="M1 1.500h13" strokeWidth="1.2" /><path d="M1 4.500h15v4H1zM1 11h15v4.500H1z" fill={green} stroke="#1b5e4f" strokeDasharray="1.5 1" /></Icon></ModeButton>
            <ModeButton aria-label="Format visual"><Icon s={17} box="0 0 17 17"><path d="M8 15.500H1.500v-15h7L12 4v3M8 .5V4.500h4M16 6l-6 7M10 12.500c-1.500-.5-2.500 1-2.500 3 2 .5 3.500-.5 3.300-2.200" /></Icon></ModeButton>
          </ModeRow>
          <svg width="117" height="6" viewBox="0 0 117 6" fill="none" stroke="#a19f9d"><path d="M0 5.500h11l4.500-5 4.500 5h97" /></svg>
          <IconGrid>
            {visuals.map(([n, art]) => <button key={n} aria-label={n}><Icon s={13}>{art}</Icon></button>)}
          </IconGrid>
          <Heading $top={8}>Values</Heading>
          <Well $top={3}>Add data fields here</Well>
          <Heading $top={7} $strong>Drill through</Heading>
          <ToggleRow>Cross-report<Toggle><input type="checkbox" role="switch" />Off</Toggle></ToggleRow>
          <ToggleRow>Keep all filters<Toggle $on><input type="checkbox" role="switch" defaultChecked />On</Toggle></ToggleRow>
          <Well $top={4}>Add drill-through fields here</Well>
        </Pane>

        <Pane>
          <PaneHead><h2>Data</h2><Chevrons /></PaneHead>
          <DataSearch><Magnifier s={10} c="#797775" /><input type="search" placeholder="Search" aria-label="Search data" /></DataSearch>
          {['Data1', 'Data1 (2)'].map(t => (
            <TreeRow key={t}>
              <Icon w={5} h={8} box="0 0 5 8"><path d="m.5.5 3.500 3.500L.5 7.500" /></Icon>
              <Icon s={9}><path strokeWidth="1.6" d="M1.500 1h11v12h-11zM1.500 4.500h11M1.500 9h11M5 1v12M9 1v12" /></Icon>
              {t}
            </TreeRow>
          ))}
        </Pane>
      </Work>

      <Status>
        Page 1 of 1
        <Zoom>-<input type="range" min="10" max="200" defaultValue="83" aria-label="Zoom" />+</Zoom>
        <Percent>83%</Percent>
        <Icon w={11} h={9} box="0 0 11 9" c="#605e5c"><path d="M.5.5h10v8H.5z" /><path d="M2 4V2h2M7 2h2v2M9 5v2H7M4 7H2V5" /></Icon>
      </Status>

      <Taskbar>
        <Weather>
          <svg width="17" height="19" viewBox="0 0 17 19"><circle cx="7" cy="8" r="5" fill="#f6a93b" /><path d="M3 18a3 3 0 0 1 0-6 5 5 0 0 1 9 0 3 3 0 0 1 1 6z" fill="#c3d3f0" /><circle cx="12" cy="5" r="5" fill="#c3261c" /><text x="12" y="8" fontSize="7" fill="#fff" textAnchor="middle">1</text></svg>
          <span>59°F<br />Mo</span>
        </Weather>
        <Apps>
          <Start aria-label="Start"><svg width="15" height="15" viewBox="0 0 15 15" fill="#1687dc"><path d="M0 0h7v7H0zM8 0h7v7H8zM0 8h7v7H0zM8 8h7v7H8z" /></svg></Start>
          <TaskSearch>
            <Magnifier s={9} />
            <input type="search" placeholder="Search" aria-label="Search Windows" />
            <svg width="32" height="18" viewBox="0 0 32 18"><ellipse cx="16" cy="10" rx="15" ry="7" fill="#e9c38a" /><path d="M3 13 6 9l5 1 3-5 4 3 5 1 5-2 1 6z" fill="#a85d24" /><path d="M15 1v8M2 15h28" stroke="#5f4a35" strokeWidth="1.5" /><circle cx="7" cy="14" r="2" fill="#4a4038" /><circle cx="24" cy="14" r="2" fill="#4a4038" /></svg>
          </TaskSearch>
          {apps.map(a => (
            <AppButton key={a.name} aria-label={a.name} $open={a.open} $on={a.on}><svg width="17" height="17" viewBox="0 0 18 18">{a.art}</svg></AppButton>
          ))}
        </Apps>
        <Tray>
          <Down up w={7} />
          <QuickSettings aria-label="Quick settings"><Icon s={9}><path strokeWidth="2" d="M0 4h14M0 10h14M4 1v6M10 7v6" /></Icon></QuickSettings>
          <Lang>ENG</Lang>
          <Icon s={11}><path strokeWidth="1.3" d="M1 5.500c3.500-4 8.500-4 12 0M3 8c2.500-2.800 5.500-2.800 8 0M5 10c1.300-1.300 2.700-1.300 4 0M6.500 12h1" /></Icon>
          <Icon s={11}><path d="M1 5h2l3-3v10L3 9H1zM8 5c1 1 1 3 0 4M10 3c2 2 2 6 0 8M12 2c2.500 3 2.500 7 0 10" /></Icon>
          <Icon w={13} h={8} box="0 0 13 8"><rect x=".5" y=".5" width="11" height="7" rx="1" /><path d="M2 2h4v4H2zM12.500 3v2" fill={ink} /></Icon>
          <Clock>٠٩:٠٢ م<br />٢٠٢٦/٠٣/٣٠</Clock>
        </Tray>
        <Popup role="dialog" aria-label="Internet Download Manager">
          <Icon w={9} h={8} box="0 0 9 8" c="#797775"><path d="M.5.5h8v7h-8z" fill="#fff" /><path d="M1 1h4v6H1z" fill="#2d8a78" stroke="none" /></Icon>
          Internet Download Manager
          <button aria-label="Close"><Icon s={6} box="0 0 6 6" c="#8a8886"><path d="m.5.5 5 5m0-5-5 5" /></Icon></button>
        </Popup>
      </Taskbar>
    </Shell>
  );
}
